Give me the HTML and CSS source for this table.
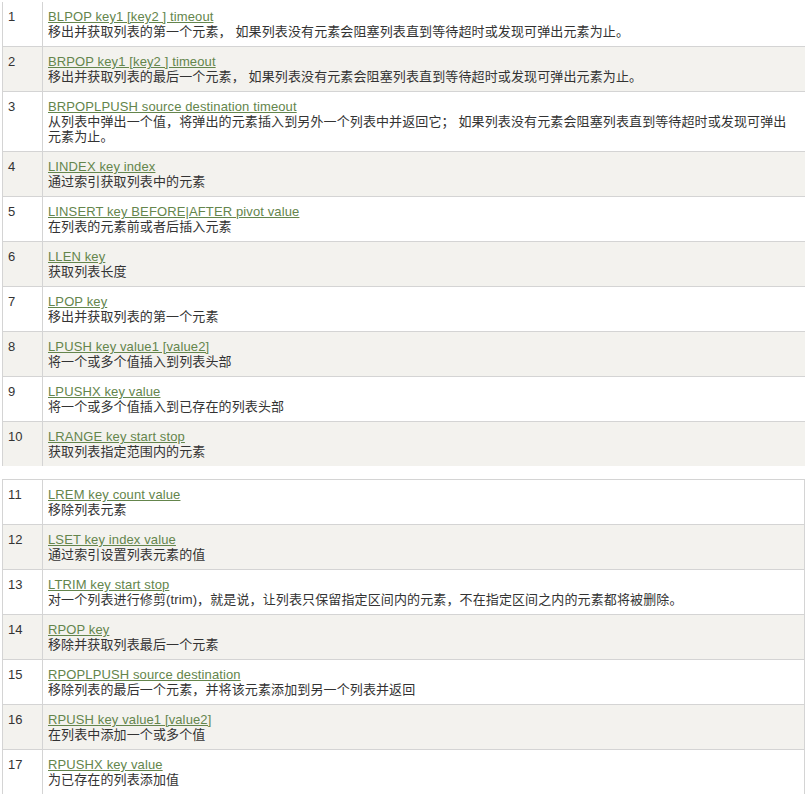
FILE: index.html
```html
<!DOCTYPE html>
<html lang="zh-CN">
<head>
  <meta charset="UTF-8">
  <meta name="viewport" content="width=device-width, initial-scale=1.0">
  <title>Redis 列表命令</title>
  <link rel="stylesheet" href="styles.css">
</head>
<body>
  <div class="page">
    <!-- Commands 1 - 10 -->
    <table class="reference cut-top">
      <tbody>
        <tr>
          <td class="num">1</td>
          <td><a href="#">BLPOP key1 [key2 ] timeout</a><br>移出并获取列表的第一个元素， 如果列表没有元素会阻塞列表直到等待超时或发现可弹出元素为止。</td>
        </tr>
        <tr>
          <td class="num">2</td>
          <td><a href="#">BRPOP key1 [key2 ] timeout</a><br>移出并获取列表的最后一个元素， 如果列表没有元素会阻塞列表直到等待超时或发现可弹出元素为止。</td>
        </tr>
        <tr>
          <td class="num">3</td>
          <td><a href="#">BRPOPLPUSH source destination timeout</a><br>从列表中弹出一个值，将弹出的元素插入到另外一个列表中并返回它； 如果列表没有元素会阻塞列表直到等待超时或发现可弹出元素为止。</td>
        </tr>
        <tr>
          <td class="num">4</td>
          <td><a href="#">LINDEX key index</a><br>通过索引获取列表中的元素</td>
        </tr>
        <tr>
          <td class="num">5</td>
          <td><a href="#">LINSERT key BEFORE|AFTER pivot value</a><br>在列表的元素前或者后插入元素</td>
        </tr>
        <tr>
          <td class="num">6</td>
          <td><a href="#">LLEN key</a><br>获取列表长度</td>
        </tr>
        <tr>
          <td class="num">7</td>
          <td><a href="#">LPOP key</a><br>移出并获取列表的第一个元素</td>
        </tr>
        <tr>
          <td class="num">8</td>
          <td><a href="#">LPUSH key value1 [value2]</a><br>将一个或多个值插入到列表头部</td>
        </tr>
        <tr>
          <td class="num">9</td>
          <td><a href="#">LPUSHX key value</a><br>将一个或多个值插入到已存在的列表头部</td>
        </tr>
        <tr>
          <td class="num">10</td>
          <td><a href="#">LRANGE key start stop</a><br>获取列表指定范围内的元素</td>
        </tr>
      </tbody>
    </table>

    <!-- Commands 11 - 17 -->
    <table class="reference">
      <tbody>
        <tr>
          <td class="num">11</td>
          <td><a href="#">LREM key count value</a><br>移除列表元素</td>
        </tr>
        <tr>
          <td class="num">12</td>
          <td><a href="#">LSET key index value</a><br>通过索引设置列表元素的值</td>
        </tr>
        <tr>
          <td class="num">13</td>
          <td><a href="#">LTRIM key start stop</a><br>对一个列表进行修剪(trim)，就是说，让列表只保留指定区间内的元素，不在指定区间之内的元素都将被删除。</td>
        </tr>
        <tr>
          <td class="num">14</td>
          <td><a href="#">RPOP key</a><br>移除并获取列表最后一个元素</td>
        </tr>
        <tr>
          <td class="num">15</td>
          <td><a href="#">RPOPLPUSH source destination</a><br>移除列表的最后一个元素，并将该元素添加到另一个列表并返回</td>
        </tr>
        <tr>
          <td class="num">16</td>
          <td><a href="#">RPUSH key value1 [value2]</a><br>在列表中添加一个或多个值</td>
        </tr>
        <tr>
          <td class="num">17</td>
          <td><a href="#">RPUSHX key value</a><br>为已存在的列表添加值</td>
        </tr>
      </tbody>
    </table>
  </div>
</body>
</html>
```

FILE: styles.css
```css
/* Reset */
body, html {
  margin: 0;
  padding: 0;
  background-color: #fff;
  font-family: "Liberation Sans", Arial, "Noto Sans CJK SC", sans-serif;
  font-size: 13px;
  letter-spacing: 0.12px;
  color: #333;
}

/* Container */
.page {
  padding: 2px 0 0 2px;
}

/* Reference table */
.reference {
  width: 803px;
  table-layout: fixed;
  border-collapse: separate;
  border-spacing: 0;
  border-right: 1px solid #d4d4d4;
  margin-bottom: 13px;
}

.reference td {
  box-sizing: border-box;
  padding: 7px 10px 7px 5px;
  line-height: 15px;
  vertical-align: top;
  border-left: 1px solid #d4d4d4;
  border-top: 1px solid #d4d4d4;
}

.reference td.num {
  width: 40px;
  padding-right: 5px;
}

.reference tr:nth-child(even) td {
  background-color: #f3f2ee;
}

.reference a {
  color: #64854c;
  text-decoration: underline;
}

/* First block is cut off at the top and on the right */
.cut-top {
  border-right: none;
}

.cut-top tr:first-child td {
  border-top: none;
}
```
